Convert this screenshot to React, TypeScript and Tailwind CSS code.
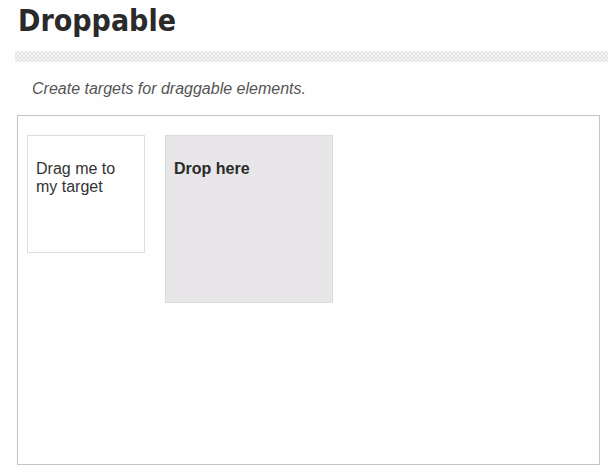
export default function App() {
  return (
    <div className="w-[608px] h-[472px] bg-[#fefefe] overflow-hidden font-['Liberation_Sans',Arial,sans-serif] text-[#333]">
      <h1 className="pl-[18px] pt-[1px] h-[51px] font-['DejaVu_Sans_Condensed','DejaVu_Sans',sans-serif] font-bold text-[30px] leading-[40px] text-[#2a2a2a] tracking-[0px]">
        Droppable
      </h1>
      <div className="ml-[15px] h-[11px] bg-[repeating-conic-gradient(#e4e3e5_0_25%,#f4f4f5_0_50%)] bg-[length:4px_4px]" />
      <p className="pl-[32px] pt-[17px] h-[53px] italic text-[16px] leading-[19px] text-[#555]">
        Create targets for draggable elements.
      </p>
      <div className="ml-[17px] w-[583px] h-[350px] border border-[#c4c4c4] bg-[#fefefe] pt-[19px] pl-[9px] flex gap-[20px] items-start">
        <div className="w-[118px] h-[118px] border border-[#dddddd] bg-white px-[8px] pt-[24px] text-[16px] leading-[18px] text-[#333]">
          Drag me to my target
        </div>
        <div className="w-[168px] h-[168px] border border-[#dcdcdc] bg-[#e8e6e9] px-[8px] pt-[24px] text-[16px] leading-[18px] font-bold text-[#2a2a2a]">
          Drop here
        </div>
      </div>
    </div>
  );
}
